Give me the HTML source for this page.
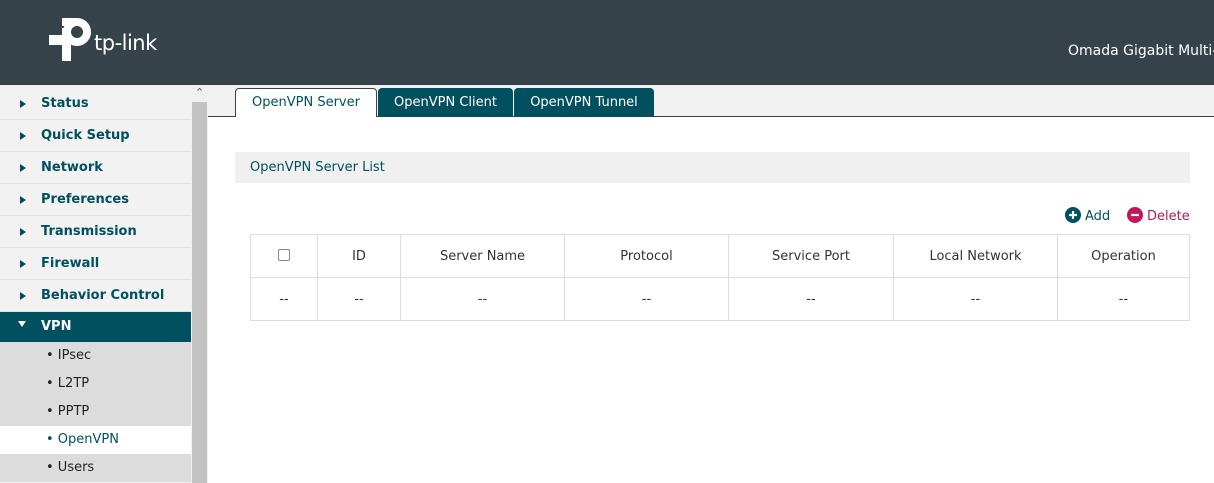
<!DOCTYPE html>
<html><head><style>
*{margin:0;padding:0;box-sizing:border-box}
body{width:1214px;height:483px;overflow:hidden;font-family:"DejaVu Sans","Liberation Sans",sans-serif;font-size:13px;color:#333;background:#fff;position:relative}
.hdr{position:absolute;left:0;top:0;width:1214px;height:85px;background:#37434a}
.title{position:absolute;left:1068px;top:43px;color:#fff;font-size:14px;white-space:nowrap}
.side{position:absolute;left:0;top:85px;width:191px;height:398px;background:#f2f2f2;padding-top:3px}
.mi{height:32px;border-bottom:1px solid #e0e0e0;font-weight:bold;color:#00505f;font-size:13px;line-height:32px;padding-left:41px;position:relative}
.mi:before{content:"";position:absolute;left:20px;top:12px;border-left:6px solid #00505f;border-top:4px solid transparent;border-bottom:4px solid transparent}
.mi.act{background:#00505f;color:#fff;height:30px;line-height:30px;border:none}
.mi.act:before{border-top:6px solid #fff;border-left:4px solid transparent;border-right:4px solid transparent;border-bottom:0;left:18px;top:9px}
.sub{height:28px;line-height:28px;background:#dcdcdc;padding-left:46px;font-size:13px;color:#222}
.sub.on{background:#fff;color:#00505f}
.scr{position:absolute;left:191px;top:85px;width:17px;height:398px;background:#f0f0f0}
.thumb{position:absolute;left:192px;top:102px;width:15px;height:381px;background:#c2c2c2}
.strip{position:absolute;left:208px;top:85px;width:1006px;height:32px;background:#f2f2f2;border-bottom:1px solid #37434a}
.tab{position:absolute;top:88px;height:29px;line-height:29px;text-align:center;font-size:13px;border-radius:4px 4px 0 0;background:#00505f;color:#fff}
.tab.on{background:#fff;color:#00505f;border:1px solid #37434a;border-bottom:none;height:29px;line-height:28px}
.bar{position:absolute;left:235px;top:152px;width:955px;height:31px;background:#f0f0f0;color:#00505f;line-height:31px;padding-left:15px}
table{position:absolute;left:250px;top:234px;width:940px;border-collapse:collapse}
td{border:1px solid #ddd;text-align:center;height:43px;font-size:13px;color:#333}
.btn{position:absolute;top:207px;font-size:13px;line-height:16px}
.ic{display:inline-block;width:16px;height:16px;border-radius:50%;vertical-align:-3px;margin-right:4px;position:relative}
</style></head><body>
<div class="hdr">
<svg style="position:absolute;left:48px;top:18px" width="120" height="44" viewBox="0 0 120 44">
<circle cx="29" cy="14" r="10" fill="none" stroke="#fff" stroke-width="8"/>
<rect x="14" y="10" width="9" height="33" fill="#fff"/>
<rect x="1" y="17" width="22" height="10" fill="#fff"/>
<rect x="14" y="0" width="15" height="8" fill="#fff"/>
<text x="46" y="32" fill="#fff" font-family="DejaVu Sans,sans-serif" font-size="21" letter-spacing="-0.5">tp-link</text>
</svg>
<div class="title">Omada Gigabit Multi-</div>
</div>
<div class="side">
<div class="mi">Status</div>
<div class="mi">Quick Setup</div>
<div class="mi">Network</div>
<div class="mi">Preferences</div>
<div class="mi">Transmission</div>
<div class="mi">Firewall</div>
<div class="mi">Behavior Control</div>
<div class="mi act">VPN</div>
<div class="sub">• IPsec</div>
<div class="sub">• L2TP</div>
<div class="sub">• PPTP</div>
<div class="sub on">• OpenVPN</div>
<div class="sub">• Users</div>
</div>
<div class="scr"></div><div class="thumb"></div>
<div style="position:absolute;left:195px;top:86px;font-size:11px;color:#555">&#8963;</div>
<div class="strip"></div>
<div class="tab on" style="left:235px;width:142px">OpenVPN Server</div>
<div class="tab" style="left:378px;width:135px">OpenVPN Client</div>
<div class="tab" style="left:514px;width:140px">OpenVPN Tunnel</div>
<div class="bar">OpenVPN Server List</div>
<div class="btn" style="left:1065px;color:#00505f"><span class="ic" style="background:#00505f"><svg width="16" height="16" style="position:absolute;left:0;top:0"><path d="M8 4V12M4 8H12" stroke="#fff" stroke-width="2.2"/></svg></span>Add</div>
<div class="btn" style="left:1127px;color:#b5195b"><span class="ic" style="background:#c2185b"><svg width="16" height="16" style="position:absolute;left:0;top:0"><path d="M4 8H12" stroke="#fff" stroke-width="2.2"/></svg></span>Delete</div>
<table>
<tr><td style="width:67px"><span style="display:inline-block;width:12px;height:12px;border:1px solid #888;border-radius:2px;vertical-align:-1px"></span></td><td style="width:83px">ID</td><td style="width:164px">Server Name</td><td style="width:164px">Protocol</td><td style="width:165px">Service Port</td><td style="width:164px">Local Network</td><td>Operation</td></tr>
<tr><td>--</td><td>--</td><td>--</td><td>--</td><td>--</td><td>--</td><td>--</td></tr>
</table>
</body></html>
